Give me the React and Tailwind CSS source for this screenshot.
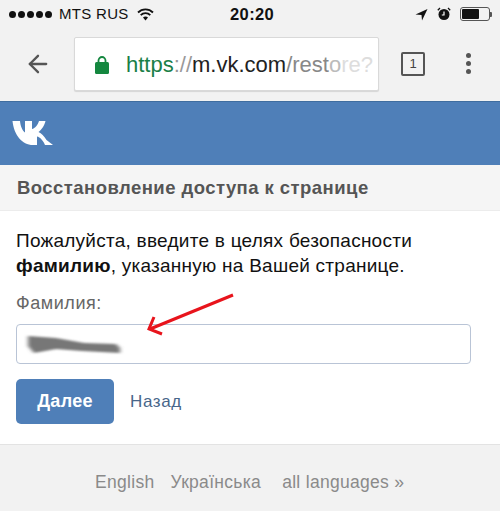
import { ArrowLeft } from "lucide-react";

const font = "font-['Liberation_Sans',Arial,sans-serif]";

const StatusBar = () => (
  <div className="relative flex h-[28px] items-center justify-between pl-[9px] pr-[8px] text-[#111]">
    <div className="flex items-center">
      <div className="flex gap-[2px]">
        {[0, 1, 2, 3, 4].map((i) => (
          <span key={i} className="h-[7px] w-[7px] rounded-full bg-[#111]" />
        ))}
      </div>
      <span className="ml-[7px] text-[15px] tracking-[0.3px]">MTS RUS</span>
      <svg className="ml-[8px]" width="17" height="13" viewBox="0 0 17 13">
        <path d="M1 4.500a10.500 10.500 0 0 1 15 0" fill="none" stroke="#111" strokeWidth="1.8" />
        <path d="M3.700 7.200a6.700 6.700 0 0 1 9.600 0" fill="none" stroke="#111" strokeWidth="1.8" />
        <path d="M6 9.600a3.400 3.400 0 0 1 5 0L8.500 12.500z" fill="#111" />
      </svg>
    </div>
    <span className="absolute left-[230px] text-[16.5px] font-bold tracking-[0.4px]">20:20</span>
    <div className="flex items-center gap-[9px]">
      <svg width="13" height="13" viewBox="0 0 13 13">
        <path d="M12.500 1 L0.500 6.500 L6.500 7 L7 12.500 Z" fill="#111" />
      </svg>
      <svg width="14" height="14" viewBox="0 0 14 14">
        <circle cx="7" cy="7.500" r="5.500" fill="#111" />
        <path d="M7 4.500V8H4.800" fill="none" stroke="#fff" strokeWidth="1.2" />
        <path d="M0.800 3.200L3 1M13.200 3.200L11 1" stroke="#111" strokeWidth="1.3" />
      </svg>
      <div className="flex items-center">
        <div className="h-[14px] w-[30px] rounded-[3px] border border-[#555] p-[1px]">
          <div className="h-full w-[17px] rounded-[1px] bg-[#111]" />
        </div>
        <div className="h-[5px] w-[2px] rounded-r-[1px] bg-[#555]" />
      </div>
    </div>
  </div>
);

const Toolbar = () => (
  <div className="flex h-[73px] items-start">
    <div className="flex h-[72px] w-[74px] items-center pl-[24px]">
      <ArrowLeft size={28} strokeWidth={2} color="#555" />
    </div>
    <div className="mt-[9px] flex h-[54px] w-[305px] items-center overflow-hidden rounded-[2px] border border-[#d9d9d9] bg-white pl-[20px] shadow-[0_1px_1px_rgba(0,0,0,0.12)]">
      <svg width="14" height="19" viewBox="0 0 14 19">
        <path d="M3.500 8V5.500a3.500 3.500 0 0 1 7 0V8" fill="none" stroke="#14873f" strokeWidth="1.8" />
        <rect x="0" y="7" width="14" height="12" rx="1.500" fill="#14873f" />
      </svg>
      <div className="ml-[17px] whitespace-nowrap text-[22px]">
        <span className="text-[#1a8048]">https</span>
        <span className="text-[#999]">://</span>
        <span className="text-[#222]">m.vk.com</span>
        <span className="text-[#888]">/rest</span>
        <span className="text-[#bbb]">o</span>
        <span className="text-[#ddd]">re?</span>
      </div>
    </div>
    <div className="ml-[22px] mt-[24px] flex h-[24px] w-[24px] items-center justify-center rounded-[2px] border-[2.5px] border-[#555] text-[13px] text-[#444]">
      1
    </div>
    <div className="ml-[41px] mt-[25px] flex flex-col gap-[3px]">
      {[0, 1, 2].map((i) => (
        <span key={i} className="h-[5px] w-[5px] rounded-full bg-[#555]" />
      ))}
    </div>
  </div>
);

export default function App() {
  return (
    <div className={`${font} h-[511px] w-[500px] overflow-hidden bg-[#f2f2f2]`}>
      <StatusBar />
      <Toolbar />

      <div className="flex h-[64px] items-start border-t border-[#3f6d9f] bg-[#4f7fb8] pl-[12px] pt-[18px]">
        <svg width="42" height="26" viewBox="0 0 42 26">
          <path
            d="M0.500 1H8C8.400 6 10.500 11 13 12.500V1H20V9C23 8.500 26 4.500 27 1H33.500C32.500 6 29 10 26.500 12C29.500 13.500 32 16 34.500 20L41 25H33C31.500 21 28 17 25 16.500V25H21C10 25 2 15 0.500 1Z"
            fill="#fff"
          />
        </svg>
      </div>

      <div className="flex h-[46px] items-center border-b border-[#ececec] bg-[#f5f5f5] pl-[17px]">
        <h1 className="text-[18.5px] font-bold tracking-[0.45px] text-[#555]">
          Восстановление доступа к странице
        </h1>
      </div>

      <div className="h-[234px] border-b border-[#e3e3e3] bg-white px-[16px] pt-[17px]">
        <p className="text-[19px] leading-[25px] tracking-[0.25px] text-[#111]">
          Пожалуйста, введите в целях безопасности
          <br />
          <b>фамилию</b>, указанную на Вашей странице.
        </p>
        <div className="mt-[13px] text-[18px] leading-[24px] tracking-[0.55px] text-[#666]">Фамилия:</div>

        <div className="relative mt-[9px]">
          <div className="h-[40px] w-[455px] rounded-[4px] border border-[#b9c4d6] bg-white" />
          <svg
            className="absolute left-[6px] top-[6px]"
            width="116"
            height="30"
            viewBox="0 0 116 30"
          >
            <defs>
              <filter id="smear" x="-10%" y="-50%" width="120%" height="200%">
                <feGaussianBlur stdDeviation="2 1.3" />
              </filter>
            </defs>
            <path
              d="M6 6 L34 8 L62 13 L94 14 L98 18 L98 23 L60 21 L34 19 L12 23 L6 16 Z"
              fill="#777"
              filter="url(#smear)"
            />
          </svg>
          <svg
            className="absolute left-[113px] top-[-32px]"
            width="110"
            height="60"
            viewBox="0 0 110 60"
          >
            <path d="M104 3 L21 37" stroke="#e8141c" strokeWidth="3" fill="none" />
            <path d="M25 25 L20 37 L33 42" stroke="#e8141c" strokeWidth="3" fill="none" />
          </svg>
        </div>

        <div className="mt-[15px] flex items-center">
          <button className="h-[45px] w-[98px] rounded-[5px] bg-[#4f7fb8] text-[18px] font-bold tracking-[0.3px] text-white">
            Далее
          </button>
          <a className="ml-[16px] text-[17px] tracking-[0.6px] text-[#48668a]">Назад</a>
        </div>
      </div>

      <div className="flex h-[72px] items-start pl-[95px] pt-[24px] text-[17.5px] tracking-[0.3px] text-[#8a8a8a]">
        <span>English</span>
        <span className="ml-[16px]">Українська</span>
        <span className="ml-[21px]">all languages »</span>
      </div>
    </div>
  );
}
